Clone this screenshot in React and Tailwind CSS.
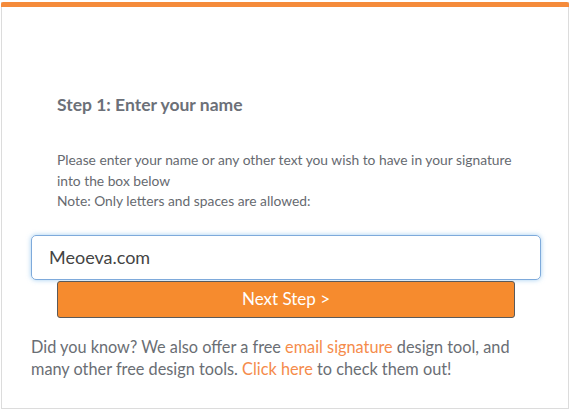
import React, { useState } from 'react';

function App() {
    const [name, setName] = useState('Meoeva.com');

    return (
        <div className="w-[572px] h-[411px] bg-white p-[1px] pt-[2px]" style={{ fontFamily: 'Lato, "Open Sans", sans-serif' }}>
            <div className="h-[407px] w-[568px] border border-[#dcdcdc] border-t-0 flex flex-col">
                <div className="h-[5px] bg-[#f58b3b] -mx-[1px] rounded-t-[2px]" />
                <div className="pl-[55px] pt-[88px]">
                    <h2 className="text-[17.5px] font-bold text-[#6c7078] leading-[20px]">Step 1: Enter your name</h2>
                    <p className="mt-[35px] text-[13.8px] leading-[20.5px] text-[#666a70] pr-2">
                        Please enter your name or any other text you wish to have in your signature<br />
                        into the box below<br />
                        Note: Only letters and spaces are allowed:
                    </p>
                </div>
                <div className="pl-[29px] pr-[27px] mt-[23px]">
                    <input
                        value={name}
                        onChange={(e) => setName(e.target.value)}
                        className="w-full h-[45px] border border-[#7eaadb] rounded-[5px] pl-[17px] text-[18px] text-[#444] outline-none shadow-[0_0_5px_rgba(102,175,233,0.6)]"
                        style={{ fontFamily: 'Lato, sans-serif' }}
                    />
                </div>
                <div className="pl-[55px] pr-[53px] mt-[1px]">
                    <button className="w-full h-[37px] bg-[#f68b2e] border border-[#5a5a5a] rounded-[3px] text-white text-[17px]">
                        Next Step &gt;
                    </button>
                </div>
                <p className="pl-[29px] w-[530px] mt-[18px] text-[16.3px] leading-[22px] text-[#6a6e74]">
                    Did you know? We also offer a free <span className="text-[#f58b4b]">email signature</span> design tool, and many other free design tools. <span className="text-[#f58b4b]">Click here</span> to check them out!
                </p>
            </div>
        </div>
    );
}

export default App;
